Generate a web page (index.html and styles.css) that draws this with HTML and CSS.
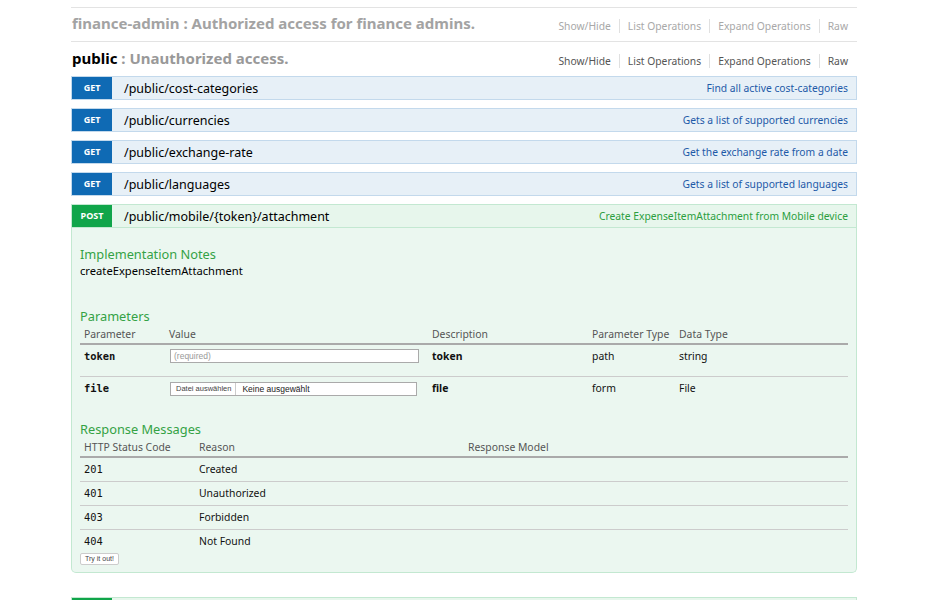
FILE: index.html
```html
<!DOCTYPE html>
<html>
<head>
<meta charset="utf-8">
<link rel="stylesheet" href="styles.css">
</head>
<body>
<div class="wrap">
  <div class="resource faded">
    <div class="heading">
      <h2><span class="name">finance-admin</span> : Authorized access for finance admins.</h2>
      <ul class="options">
        <li>Show/Hide</li>
        <li>List Operations</li>
        <li>Expand Operations</li>
        <li>Raw</li>
      </ul>
    </div>
  </div>
  <div class="resource active">
    <div class="heading">
      <h2><span class="name">public</span> : Unauthorized access.</h2>
      <ul class="options">
        <li>Show/Hide</li>
        <li>List Operations</li>
        <li>Expand Operations</li>
        <li>Raw</li>
      </ul>
    </div>
    <ul class="ops">
      <li class="op get">
        <div class="bar"><span class="method">GET</span><span class="path">/public/cost-categories</span><span class="summary">Find all active cost-categories</span></div>
      </li>
      <li class="op get">
        <div class="bar"><span class="method">GET</span><span class="path">/public/currencies</span><span class="summary">Gets a list of supported currencies</span></div>
      </li>
      <li class="op get">
        <div class="bar"><span class="method">GET</span><span class="path">/public/exchange-rate</span><span class="summary">Get the exchange rate from a date</span></div>
      </li>
      <li class="op get">
        <div class="bar"><span class="method">GET</span><span class="path">/public/languages</span><span class="summary">Gets a list of supported languages</span></div>
      </li>
      <li class="op post">
        <div class="bar"><span class="method">POST</span><span class="path">/public/mobile/{token}/attachment</span><span class="summary">Create ExpenseItemAttachment from Mobile device</span></div>
        <div class="content">
          <h4 class="notes-title">Implementation Notes</h4>
          <p class="notes">createExpenseItemAttachment</p>
          <h4 class="params-title">Parameters</h4>
          <table class="params">
            <colgroup><col class="c1"><col class="c2"><col class="c3"><col class="c4"><col class="c5"></colgroup>
            <thead>
              <tr><th>Parameter</th><th>Value</th><th>Description</th><th>Parameter Type</th><th>Data Type</th></tr>
            </thead>
            <tbody>
              <tr class="sep">
                <td class="code">token</td>
                <td><div class="input"><span class="ph">(required)</span></div></td>
                <td class="strong">token</td>
                <td>path</td>
                <td>string</td>
              </tr>
              <tr>
                <td class="code">file</td>
                <td><div class="file"><span class="choose">Datei auswählen</span><span class="none">Keine ausgewählt</span></div></td>
                <td class="strong">file</td>
                <td>form</td>
                <td>File</td>
              </tr>
            </tbody>
          </table>
          <h4 class="resp-title">Response Messages</h4>
          <table class="resp">
            <colgroup><col class="r1"><col class="r2"><col class="r3"></colgroup>
            <thead>
              <tr><th>HTTP Status Code</th><th>Reason</th><th>Response Model</th></tr>
            </thead>
            <tbody>
              <tr class="sep"><td class="code">201</td><td>Created</td><td></td></tr>
              <tr class="sep"><td class="code">401</td><td>Unauthorized</td><td></td></tr>
              <tr class="sep"><td class="code">403</td><td>Forbidden</td><td></td></tr>
              <tr><td class="code">404</td><td>Not Found</td><td></td></tr>
            </tbody>
          </table>
          <button class="try">Try it out!</button>
        </div>
      </li>
      <li class="op post next">
        <div class="bar"><span class="method"></span><span class="path"></span><span class="summary"></span></div>
      </li>
    </ul>
  </div>
</div>
</body>
</html>
```

FILE: styles.css
```css
html, body {
  margin: 0;
  padding: 0;
  background: #fff;
  overflow: hidden;
}
body {
  font-family: "Noto Sans", "Open Sans", sans-serif;
  color: #000;
}
.wrap {
  width: 786px;
  margin-left: 71px;
  padding-top: 7px;
}
ul {
  list-style: none;
  margin: 0;
  padding: 0;
}
.resource.faded {
  border-top: 1px solid #e3e3e3;
  border-bottom: 1px solid #e3e3e3;
}
.heading {
  display: flex;
  align-items: baseline;
  justify-content: space-between;
}
.faded .heading {
  padding: 5px 0 8px;
}
.active .heading {
  padding: 6px 0 0;
}
h2 {
  margin: 0;
  font-size: 15px;
  line-height: 20px;
  font-weight: bold;
  color: #999;
  padding-left: 1px;
}
.faded h2 {
  color: #a3a3a3;
}
.active h2 .name {
  color: #000;
}
.options {
  display: flex;
  padding-right: 9px;
  font-size: 10.3px;
  line-height: 14px;
  position: relative;
  top: 1px;
}
.options li {
  padding: 0 8px;
  border-left: 1px solid #e0e0e0;
  color: #555;
}
.options li:first-child {
  border-left: none;
}
.options li:last-child {
  padding-right: 0;
}
.faded .options li {
  color: #a8a8a8;
}
.ops {
  margin-top: 8px;
}
.op {
  margin-bottom: 8px;
}
.bar {
  display: flex;
  align-items: center;
  height: 22px;
  border: 1px solid;
}
.method {
  width: 40px;
  height: 22px;
  line-height: 22px;
  text-align: center;
  color: #fff;
  font-weight: bold;
  font-size: 9px;
}
.path {
  padding-left: 12px;
  font-size: 12.5px;
  flex: 1;
}
.summary {
  padding-right: 8px;
  font-size: 10.3px;
}
.get .bar {
  background: #e7f0f7;
  border-color: #c3d9ec;
}
.get .method {
  background: #0f6ab4;
}
.get .summary {
  color: #1e5aa8;
}
.post .bar {
  background: #e7f6ec;
  border-color: #c3e8d1;
}
.post .method {
  background: #10a54a;
}
.post .summary {
  color: #2c9e3f;
}
.content {
  background: #ebf7f0;
  border: 1px solid #c3e8d1;
  border-top: none;
  border-radius: 0 0 5px 5px;
  padding: 17px 8px 7px;
}
h4 {
  margin: 0;
  font-size: 12.8px;
  line-height: 18px;
  font-weight: normal;
  color: #34a245;
}
.notes {
  margin: 0;
  font-size: 11.2px;
  line-height: 16px;
}
.params-title {
  margin-top: 28px;
}
.resp-title {
  margin-top: 12px;
}
table {
  width: 768px;
  border-collapse: collapse;
  table-layout: fixed;
  font-size: 10.4px;
}
.c1 { width: 85px; }
.c2 { width: 263px; }
.c3 { width: 160px; }
.c4 { width: 87px; }
.c5 { width: 173px; }
.r1 { width: 115px; }
.r2 { width: 269px; }
.r3 { width: 384px; }
th {
  text-align: left;
  font-weight: normal;
  color: #555;
  padding: 0 4px;
  height: 18px;
  line-height: 18px;
  border-bottom: 2px solid #aaa;
}
td {
  vertical-align: top;
  padding: 3px 4px 0;
  line-height: 16px;
  color: #111;
}
.params tbody tr {
  height: 32px;
}
.resp tbody tr {
  height: 24px;
}
tr.sep td {
  border-bottom: 1px solid #ccc;
}
.code {
  font-family: "DejaVu Sans Mono", monospace;
  font-size: 10.4px;
}
.params .code {
  font-weight: bold;
}
.strong {
  font-weight: bold;
}
.input {
  margin-top: 1px;
  width: 247px;
  height: 12px;
  border: 1px solid #aaa;
  background: #fff;
  display: flex;
  align-items: center;
  margin-left: 1px;
}
.ph {
  font-family: "Liberation Sans", sans-serif;
  font-size: 8.5px;
  color: #999;
  padding-left: 3px;
}
.file {
  margin-top: 2px;
  width: 245px;
  height: 12px;
  border: 1px solid #aaa;
  background: #fff;
  display: flex;
  align-items: center;
  margin-left: 1px;
  font-family: "Liberation Sans", sans-serif;
}
.choose {
  font-size: 7.5px;
  color: #444;
  padding: 0 4px 0 5px;
  border-right: 1px solid #ccc;
  height: 12px;
  line-height: 12px;
}
.none {
  font-size: 8.5px;
  color: #222;
  padding-left: 6px;
}
.try {
  display: block;
  margin: 0;
  padding: 0 4px;
  height: 12px;
  font-family: "Liberation Sans", sans-serif;
  font-size: 7px;
  line-height: 10px;
  color: #444;
  background: #fff;
  border: 1px solid #ccc;
  border-radius: 2px;
}
.op.next {
  margin-top: 24px;
}
```
